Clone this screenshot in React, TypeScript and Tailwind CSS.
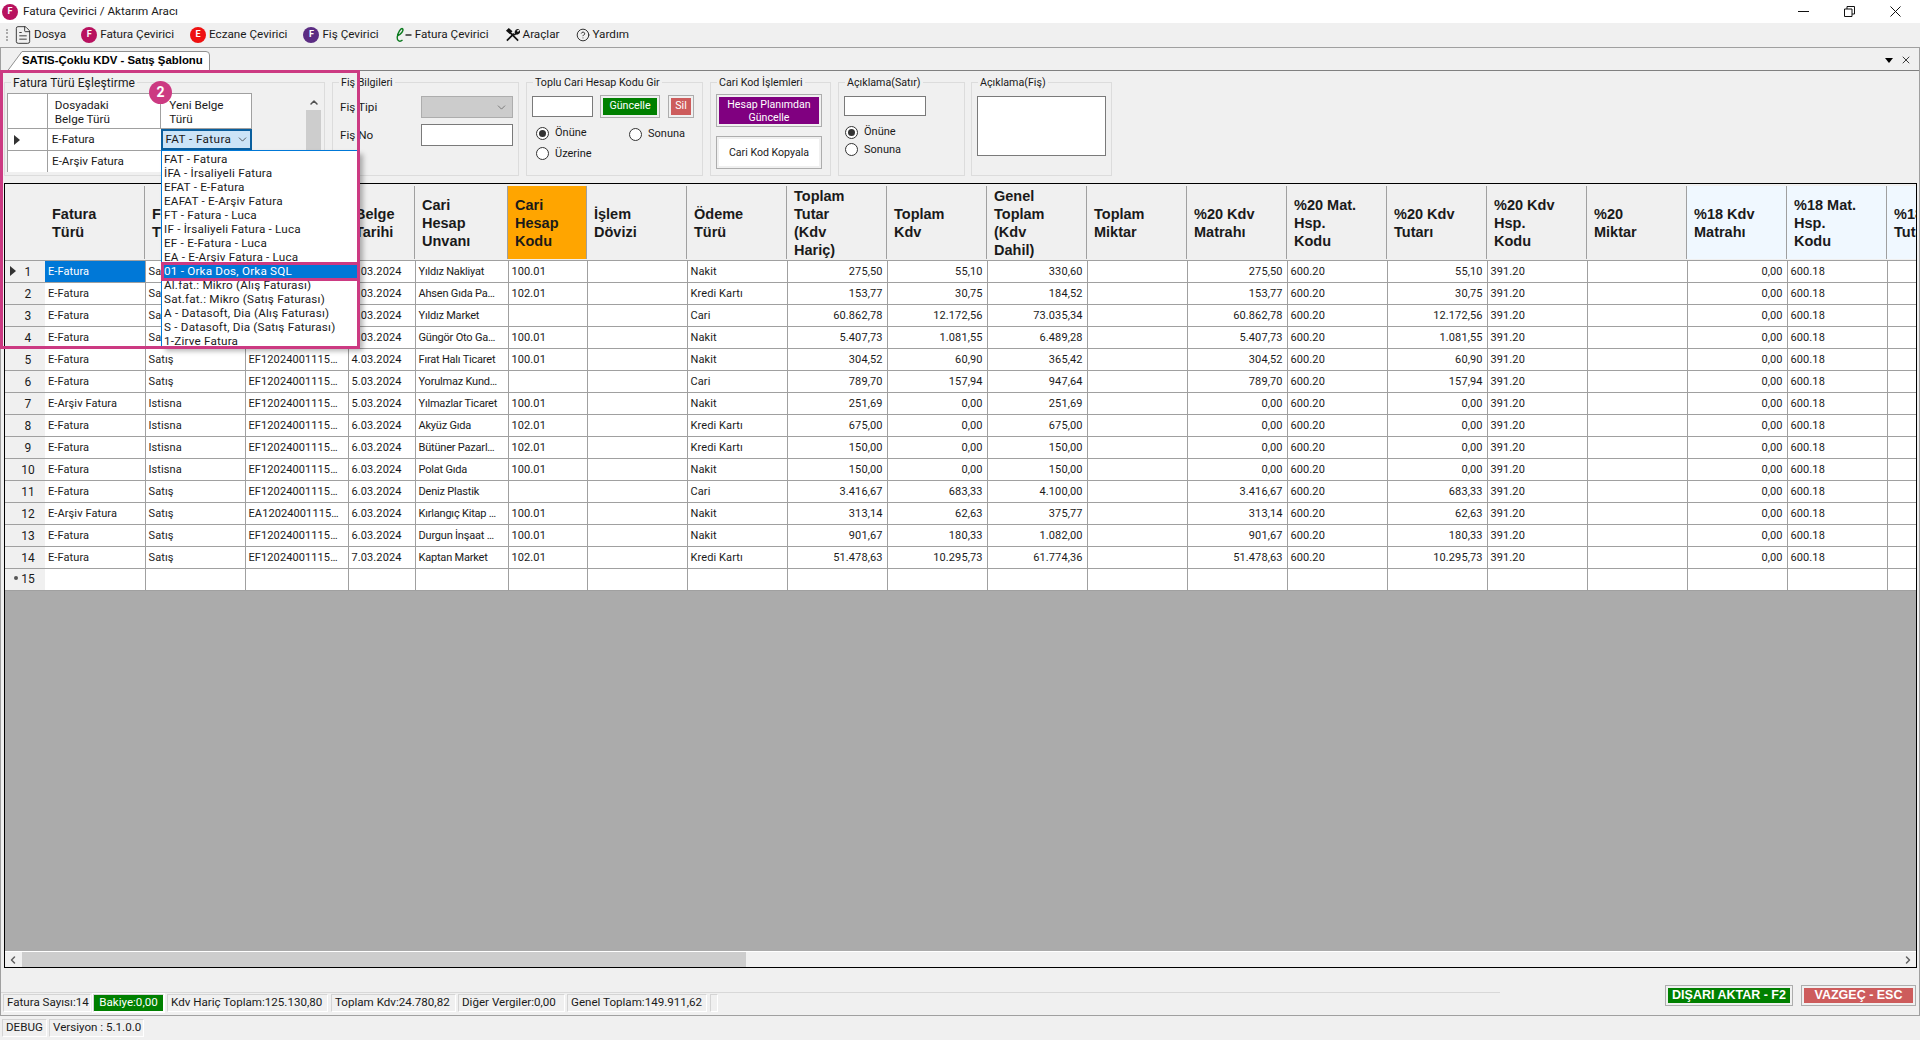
import React from "react";
import { ChevronDown, ChevronLeft, ChevronRight, ChevronUp, CircleHelp, FileText, X } from "lucide-react";

// one tuple per invoice: type, kind, belge no, date, unvan, kod, odeme, tutar, kdv, genel, %20 matrah, %20 tutar
const invoices = [
  ["E-Fatura", "Satış", "EF12024001115…", "1.03.2024", "Yıldız Nakliyat", "100.01", "Nakit", "275,50", "55,10", "330,60", "275,50", "55,10"],
  ["E-Fatura", "Satış", "EF12024001115…", "2.03.2024", "Ahsen Gıda Pa…", "102.01", "Kredi Kartı", "153,77", "30,75", "184,52", "153,77", "30,75"],
  ["E-Fatura", "Satış", "EF12024001115…", "3.03.2024", "Yıldız Market", "", "Cari", "60.862,78", "12.172,56", "73.035,34", "60.862,78", "12.172,56"],
  ["E-Fatura", "Satış", "EF12024001115…", "3.03.2024", "Güngör Oto Ga…", "100.01", "Nakit", "5.407,73", "1.081,55", "6.489,28", "5.407,73", "1.081,55"],
  ["E-Fatura", "Satış", "EF12024001115…", "4.03.2024", "Fırat Halı Ticaret", "100.01", "Nakit", "304,52", "60,90", "365,42", "304,52", "60,90"],
  ["E-Fatura", "Satış", "EF12024001115…", "5.03.2024", "Yorulmaz Kund…", "", "Cari", "789,70", "157,94", "947,64", "789,70", "157,94"],
  ["E-Arşiv Fatura", "Istisna", "EF12024001115…", "5.03.2024", "Yılmazlar Ticaret", "100.01", "Nakit", "251,69", "0,00", "251,69", "0,00", "0,00"],
  ["E-Fatura", "Istisna", "EF12024001115…", "6.03.2024", "Akyüz Gıda", "102.01", "Kredi Kartı", "675,00", "0,00", "675,00", "0,00", "0,00"],
  ["E-Fatura", "Istisna", "EF12024001115…", "6.03.2024", "Bütüner Pazarl…", "102.01", "Kredi Kartı", "150,00", "0,00", "150,00", "0,00", "0,00"],
  ["E-Fatura", "Istisna", "EF12024001115…", "6.03.2024", "Polat Gıda", "100.01", "Nakit", "150,00", "0,00", "150,00", "0,00", "0,00"],
  ["E-Fatura", "Satış", "EF12024001115…", "6.03.2024", "Deniz Plastik", "", "Cari", "3.416,67", "683,33", "4.100,00", "3.416,67", "683,33"],
  ["E-Arşiv Fatura", "Satış", "EA12024001115…", "6.03.2024", "Kırlangıç Kitap …", "100.01", "Nakit", "313,14", "62,63", "375,77", "313,14", "62,63"],
  ["E-Fatura", "Satış", "EF12024001115…", "6.03.2024", "Durgun İnşaat …", "100.01", "Nakit", "901,67", "180,33", "1.082,00", "901,67", "180,33"],
  ["E-Fatura", "Satış", "EF12024001115…", "7.03.2024", "Kaptan Market", "102.01", "Kredi Kartı", "51.478,63", "10.295,73", "61.774,36", "51.478,63", "10.295,73"],
];

const columns = [
  { title: ["Fatura", "Türü"], width: "w-[100px]" },
  { title: ["Fatura", "Tipi"], width: "w-[100px]" },
  { title: ["Belge", "No"], width: "w-[103px]" },
  { title: ["Belge", "Tarihi"], width: "w-[67px]" },
  { title: ["Cari", "Hesap", "Unvanı"], width: "w-[93px]" },
  { title: ["Cari", "Hesap", "Kodu"], width: "w-[79px]", bg: "bg-[#ffa500]" },
  { title: ["İşlem", "Dövizi"], width: "w-[100px]" },
  { title: ["Ödeme", "Türü"], width: "w-[100px]" },
  { title: ["Toplam", "Tutar", "(Kdv", "Hariç)"], width: "w-[100px]", right: true },
  { title: ["Toplam", "Kdv"], width: "w-[100px]", right: true },
  { title: ["Genel", "Toplam", "(Kdv", "Dahil)"], width: "w-[100px]", right: true },
  { title: ["Toplam", "Miktar"], width: "w-[100px]" },
  { title: ["%20 Kdv", "Matrahı"], width: "w-[100px]", right: true },
  { title: ["%20 Mat.", "Hsp.", "Kodu"], width: "w-[100px]" },
  { title: ["%20 Kdv", "Tutarı"], width: "w-[100px]", right: true },
  { title: ["%20 Kdv", "Hsp.", "Kodu"], width: "w-[100px]" },
  { title: ["%20", "Miktar"], width: "w-[100px]" },
  { title: ["%18 Kdv", "Matrahı"], width: "w-[100px]", right: true, bg: "bg-[#f0f8ff]" },
  { title: ["%18 Mat.", "Hsp.", "Kodu"], width: "w-[100px]", bg: "bg-[#f0f8ff]" },
  { title: ["%18 Kdv", "Tutarı"], width: "w-[100px]", right: true, bg: "bg-[#f0f8ff]" },
];

const belgeTurleri = [
  "FAT - Fatura",
  "İFA - İrsaliyeli Fatura",
  "EFAT - E-Fatura",
  "EAFAT - E-Arşiv Fatura",
  "FT - Fatura - Luca",
  "IF - İrsaliyeli Fatura - Luca",
  "EF - E-Fatura - Luca",
  "EA - E-Arşiv Fatura - Luca",
  "01 - Orka Dos, Orka SQL",
  "Al.fat.: Mikro (Alış Faturası)",
  "Sat.fat.: Mikro (Satış Faturası)",
  "A - Datasoft, Dia (Alış Faturası)",
  "S - Datasoft, Dia (Satış Faturası)",
  "1-Zirve Fatura",
];

function rowCells(row: string[]) {
  const [type, kind, no, date, name, code, pay, tutar, kdv, genel, m20, t20] = row;
  return [type, kind, no, date, name, code, "", pay, tutar, kdv, genel, "", m20, "600.20", t20, "391.20", "", "0,00", "600.18", ""];
}

function Badge({ letter, color }: { letter: string; color: string }) {
  return (
    <span className={`flex h-4 w-4 shrink-0 items-center justify-center rounded-full text-[9px] font-bold text-white ${color}`}>
      {letter}
    </span>
  );
}

function ToolsIcon() {
  return (
    <svg width="15" height="15" viewBox="0 0 16 16" className="shrink-0">
      <path d="M2 14.5L9.5 7M14 14.5L5 5.5" stroke="#111" strokeWidth="1.8" fill="none" />
      <path d="M1 4l3-3 4 3.5-3 3zM15.5 2.5a3.6 3.6 0 0 0-5 4.3l-1.3 1.3 1.2 1.2 1.3-1.3a3.6 3.6 0 0 0 4.3-4.7l-2.2 2-1.4-1.2z" fill="#111" />
    </svg>
  );
}

function EInvoiceIcon() {
  return (
    <svg width="17" height="16" viewBox="0 0 17 16" className="shrink-0" fill="none">
      <path d="M2 9C6 7.5 9 3.5 7.6 1.8 6 .4 2.6 6 2.2 10.2c-.3 4 2.8 5 5.3 2.8" stroke="#0b7a1e" strokeWidth="1.4" />
      <path d="M10.5 8h6" stroke="#222" strokeWidth="1.4" />
    </svg>
  );
}

function ToolbarItem({ icon, label }: { icon: React.ReactNode; label: string }) {
  return (
    <div className="flex items-center gap-[3px]">
      {icon}
      <span>{label}</span>
    </div>
  );
}

function Radio({ label, checked, className }: { label: string; checked?: boolean; className?: string }) {
  return (
    <div className={`flex items-center gap-[6px] text-[11px] ${className ?? ""}`}>
      <span className="flex h-[13px] w-[13px] items-center justify-center rounded-full border border-[#333] bg-white">
        {checked && <span className="h-[7px] w-[7px] rounded-full bg-[#333]" />}
      </span>
      {label}
    </div>
  );
}

function FrameButton({ fill, className, children }: { fill: string; className: string; children: React.ReactNode }) {
  return (
    <div className={`border border-[#adadad] p-[2px] ${className}`}>
      <div className={`flex h-full w-full items-center justify-center text-center ${fill}`}>{children}</div>
    </div>
  );
}

function Group({ title, className, legend, children }: { title: string; className: string; legend?: string; children: React.ReactNode }) {
  return (
    <fieldset className={`h-[101px] shrink-0 border border-[#dcdcdc] ${className}`}>
      <legend className={`relative top-[1px] ml-[6px] px-[2px] leading-[14px] whitespace-nowrap ${legend ?? "text-[10.7px]"}`}>{title}</legend>
      {children}
    </fieldset>
  );
}

function StatusCell({ className, children }: { className: string; children?: React.ReactNode }) {
  return (
    <div className={`flex h-[18px] items-center border border-[#d4d4d4] border-r-white border-b-white px-[3px] text-[11.6px] whitespace-nowrap ${className}`}>
      {children}
    </div>
  );
}

function BelgeTuruGroup() {
  return (
    <Group title="Fatura Türü Eşleştirme" legend="text-[12px] tracking-[0.1px]" className="w-[321px]">
      <div className="flex pt-[4px] pl-[2px]">
        <div className="w-[245px] border-t border-l border-[#a0a0a0] bg-white">
          <div className="flex h-[35px] border-b border-[#a0a0a0]">
            <div className="w-[40px] border-r border-[#a0a0a0]" />
            <div className="w-[114px] border-r border-[#a0a0a0] pt-[4px] pl-[7px] leading-[14px]">Dosyadaki<br />Belge Türü</div>
            <div className="w-[91px] border-r border-[#a0a0a0] pt-[4px] pl-[8px] leading-[14px]">Yeni Belge<br />Türü</div>
          </div>
          <div className="flex h-[22px] border-b border-[#a0a0a0]">
            <div className="flex w-[40px] items-center border-r border-[#a0a0a0] pl-[6px]">
              <span className="border-y-[5px] border-l-[6px] border-y-transparent border-l-[#333]" />
            </div>
            <div className="flex w-[114px] items-center pl-[4px]">E-Fatura</div>
            <div className="flex w-[91px] items-center overflow-hidden border-2 border-[#0a5f9e] bg-[#cce4f7] pl-[2px]">
              <span className="w-[68px] overflow-hidden tracking-[0.4px] whitespace-nowrap">FAT - Fatura</span>
              <ChevronDown size={13} strokeWidth={1.25} className="ml-[3px]" />
            </div>
          </div>
          <div className="flex h-[21px]">
            <div className="w-[40px] border-r border-[#a0a0a0]" />
            <div className="flex w-[114px] items-center pl-[4px]">E-Arşiv Fatura</div>
          </div>
        </div>
        <div className="ml-[54px] flex h-[79px] w-[15px] flex-col items-center bg-[#f0f0f0]">
          <ChevronUp size={12} strokeWidth={3} className="mt-[2px] h-[15px] text-[#505050]" />
          <div className="w-full flex-1 bg-[#cdcdcd]" />
        </div>
      </div>
    </Group>
  );
}

function OptionsPanel() {
  return (
    <div className="flex h-[112px] shrink-0 gap-[7px] pt-[4px] pl-[3px]">
      <BelgeTuruGroup />
      <Group title="Fiş Bilgileri" className="w-[187px]">
        <div className="flex items-center pt-[7px] pl-[7px]">
          <span className="w-[81px] pt-[2px]">Fiş Tipi</span>
          <div className="flex h-[22px] w-[92px] items-center justify-end border border-[#adadad] bg-[#cccccc] pr-[4px]">
            <ChevronDown size={13} strokeWidth={1.25} className="text-[#555]" />
          </div>
        </div>
        <div className="flex items-center pt-[6px] pl-[7px]">
          <span className="w-[81px] pt-[1px]">Fiş No</span>
          <div className="h-[22px] w-[92px] border border-[#7a7a7a] bg-white" />
        </div>
      </Group>
      <Group title="Toplu Cari Hesap Kodu Gir" className="w-[177px]">
        <div className="flex items-center pt-[6px] pl-[5px] text-[10.7px]">
          <div className="h-[21px] w-[61px] border border-[#7a7a7a] bg-white" />
          <FrameButton fill="bg-[#008000] text-white" className="ml-[7px] h-[23px] w-[60px]">Güncelle</FrameButton>
          <FrameButton fill="bg-[#cd5c5c] text-white" className="ml-[8px] h-[23px] w-[26px]">Sil</FrameButton>
        </div>
        <div className="grid grid-cols-[93px_1fr] pt-[6px] pl-[9px]">
          <Radio label="Önüne" checked />
          <Radio label="Sonuna" className="mt-[2px]" />
          <Radio label="Üzerine" className="mt-[3px]" />
        </div>
      </Group>
      <Group title="Cari Kod İşlemleri" className="w-[121px]">
        <div className="flex flex-col gap-[9px] pt-[5px] pl-[5px] text-[10.6px]">
          <FrameButton fill="bg-[#800080] text-white leading-[13px]" className="h-[33px] w-[106px]">
            <span>Hesap Planımdan<br />Güncelle</span>
          </FrameButton>
          <FrameButton fill="bg-white" className="h-[33px] w-[106px]">Cari Kod Kopyala</FrameButton>
        </div>
      </Group>
      <Group title="Açıklama(Satır)" className="w-[127px]">
        <div className="flex flex-col pt-[7px] pl-[5px]">
          <div className="h-[20px] w-[82px] border border-[#7a7a7a] bg-white" />
          <Radio label="Önüne" checked className="mt-[8px] ml-[1px]" />
          <Radio label="Sonuna" className="mt-[1px] ml-[1px]" />
        </div>
      </Group>
      <Group title="Açıklama(Fiş)" className="-ml-px w-[141px]">
        <div className="pt-[7px] pl-[5px]">
          <div className="h-[60px] w-[129px] border border-[#7a7a7a] bg-white" />
        </div>
      </Group>
    </div>
  );
}

function InvoiceGrid() {
  return (
    <div className="mr-[2px] ml-[3px] flex h-[785px] shrink-0 flex-col overflow-hidden border border-black bg-[#ababab]">
      <table className="w-[1881px] shrink-0 table-fixed border-collapse bg-white text-[11px] tracking-[0.1px] text-[#1a1a1a]">
        <colgroup>
          <col className="w-[40px]" />
          {columns.map((c) => (
            <col key={c.title.join(" ")} className={c.width} />
          ))}
        </colgroup>
        <thead>
          <tr>
            <th className="h-[76px] border-b border-[#a0a0a0] bg-[#f0f0f0] p-0" />
            {columns.map((c) => (
              <th key={c.title.join(" ")} className="h-[76px] border-b border-[#a0a0a0] bg-[#f0f0f0] p-0 pt-[2px]">
                <div className={`flex h-[73px] items-center border-r border-[#a0a0a0] pl-[7px] text-left font-['Liberation_Sans',sans-serif] text-[14.5px] leading-[18px] font-bold tracking-normal whitespace-nowrap ${c.bg ?? ""}`}>
                  <div>
                    {c.title.map((line) => (
                      <div key={line}>{line}</div>
                    ))}
                  </div>
                </div>
              </th>
            ))}
          </tr>
        </thead>
        <tbody>
          {invoices.map((row, i) => (
            <tr key={i} className="h-[22px]">
              <td className="border-b border-[#a0a0a0] bg-[#f0f0f0] p-0 pt-[2px] text-[12px]">
                <div className="relative pl-[6px] text-center">
                  {i === 0 && <span className="absolute top-[3px] left-[5px] border-y-[5px] border-l-[6px] border-y-transparent border-l-[#333]" />}
                  {i + 1}
                </div>
              </td>
              {rowCells(row).map((cell, j) => (
                <td
                  key={j}
                  className={`overflow-hidden border-r border-b border-[#a0a0a0] p-0 pt-[3px] whitespace-nowrap ${columns[j].right ? "pr-[4px] text-right" : "pl-[3px]"} ${j === 4 ? "tracking-[-0.2px]" : ""} ${i === 0 && j === 0 ? "bg-[#0078d7] text-white" : ""}`}
                >
                  {cell}
                </td>
              ))}
            </tr>
          ))}
          <tr className="h-[22px]">
            <td className="border-b border-[#a0a0a0] bg-[#f0f0f0] p-0 text-[12px]">
              <div className="relative pl-[6px] text-center">
                <span className="absolute top-[6px] left-[9px] h-[4px] w-[4px] rounded-full bg-[#555]" />
                15
              </div>
            </td>
            {columns.map((c) => (
              <td key={c.title.join(" ")} className="border-r border-b border-[#a0a0a0] p-0" />
            ))}
          </tr>
        </tbody>
      </table>
      <div className="flex-1" />
      <div className="flex h-[16px] shrink-0 items-center border-t border-white bg-[#f0f0f0]">
        <ChevronLeft size={12} strokeWidth={3} className="ml-[2px] text-[#606060]" />
        <div className="ml-[3px] h-full w-[724px] bg-[#cdcdcd]" />
        <div className="flex-1" />
        <ChevronRight size={12} strokeWidth={3} className="mr-[2px] text-[#606060]" />
      </div>
    </div>
  );
}

function BottomBar() {
  return (
    <div className="flex h-[47px] shrink-0 justify-between">
      <div className="pt-[24px]">
        <div className="flex h-[23px] w-[1499px] gap-[2px] border-t border-[#d8d8d8] pt-[1px] pl-[2px]">
          <StatusCell className="w-[88px]">Fatura Sayısı:14</StatusCell>
          <StatusCell className="w-[71px] justify-center border-[#008000] bg-[#008000] text-white outline outline-white">Bakiye:0,00</StatusCell>
          <StatusCell className="ml-[1px] w-[161px]">Kdv Hariç Toplam:125.130,80</StatusCell>
          <StatusCell className="ml-[1px] w-[125px]">Toplam Kdv:24.780,82</StatusCell>
          <StatusCell className="w-[107px]">Diğer Vergiler:0,00</StatusCell>
          <StatusCell className="w-[140px]">Genel Toplam:149.911,62</StatusCell>
          <StatusCell className="ml-px w-[4px]" />
        </div>
      </div>
      <div className="flex gap-[8px] pt-[17px] pr-[3px] font-['Liberation_Sans',sans-serif] text-[12.5px] font-bold text-white">
        <FrameButton fill="bg-[#008000]" className="h-[21px] w-[128px]">DIŞARI AKTAR - F2</FrameButton>
        <FrameButton fill="bg-[#cd5c5c]" className="h-[21px] w-[115px]">VAZGEÇ - ESC</FrameButton>
      </div>
    </div>
  );
}

export default function App() {
  return (
    <div className="relative flex h-[1040px] w-[1920px] flex-col overflow-hidden bg-[#f0f0f0] font-['Roboto',sans-serif] text-[11.7px] text-[#1a1a1a]">
      <div className="flex h-[23px] shrink-0 items-center bg-white pl-[2px]">
        <Badge letter="F" color="bg-[#b8125f]" />
        <span className="ml-[5px]">Fatura Çevirici / Aktarım Aracı</span>
        <div className="ml-auto flex items-center pr-[2px]">
          <div className="flex w-[45px] justify-center"><svg width="11" height="11" viewBox="0 0 11 11"><path d="M0 5.5h11" stroke="#111" /></svg></div>
          <div className="flex w-[46px] justify-center"><svg width="11" height="11" viewBox="0 0 11 11" fill="none" stroke="#111"><path d="M.5 3h7.5v7.5H.5zM3 3V.5h7.5V8H8" /></svg></div>
          <div className="flex w-[46px] justify-center"><svg width="11" height="11" viewBox="0 0 11 11"><path d="M.5.5l10 10M10.5.5l-10 10" stroke="#111" /></svg></div>
        </div>
      </div>

      <div className="flex h-[24px] shrink-0 items-center gap-4 pl-[6px]">
        <div className="mr-[-13px] h-[12px] w-[2px] border-l-2 border-dotted border-[#aaaaaa]" />
        <div className="mr-[-1px] ml-[5px] flex items-center gap-[1px]">
          <FileText size={20} strokeWidth={1} className="-ml-[3px] shrink-0" />
          <span>Dosya</span>
        </div>
        <ToolbarItem icon={<Badge letter="F" color="bg-[#b8125f]" />} label="Fatura Çevirici" />
        <ToolbarItem icon={<Badge letter="E" color="bg-[#ee1111]" />} label="Eczane Çevirici" />
        <ToolbarItem icon={<Badge letter="F" color="bg-[#5b2c83]" />} label="Fiş Çevirici" />
        <ToolbarItem icon={<EInvoiceIcon />} label="Fatura Çevirici" />
        <ToolbarItem icon={<ToolsIcon />} label="Araçlar" />
        <ToolbarItem icon={<CircleHelp size={14} strokeWidth={1.5} className="shrink-0" />} label="Yardım" />
      </div>

      <div className="flex h-[969px] shrink-0 flex-col border-x border-y border-x-[#a0a0a0] border-y-[#a0a0a0]">
        <div className="flex h-[23px] shrink-0 items-end border-b border-[#808080]">
          <div className="relative mb-[-1px] ml-[6px] flex h-[20px] w-[203px] items-center">
            <svg width="203" height="20" viewBox="0 0 203 20" className="absolute inset-0">
              <path d="M.5 20L15 .5h184a3.5 3.5 0 0 1 3.5 3.5v16" fill="#fff" stroke="#909090" />
            </svg>
            <span className="relative ml-[15px] font-['Liberation_Sans',sans-serif] text-[11.4px] font-bold whitespace-nowrap text-black">
              SATIS-Çoklu KDV - Satış Şablonu
            </span>
          </div>
          <div className="mb-[4px] ml-auto flex items-center gap-[7px] pr-[7px]">
            <span className="border-x-[4px] border-t-[5px] border-x-transparent border-t-black" />
            <X size={12} strokeWidth={1.5} className="text-black" />
          </div>
        </div>
        <OptionsPanel />
        <InvoiceGrid />
        <BottomBar />
      </div>

      <div className="flex gap-[2px] pt-[3px] pl-[2px]">
        <StatusCell className="w-[45px]">DEBUG</StatusCell>
        <StatusCell className="w-[95px]">Versiyon : 5.1.0.0</StatusCell>
      </div>

      {/* Belge turu dropdown, opened over the grid */}
      <div className="absolute top-[150px] left-[161px] h-[197px] w-[198px] border border-[#0078d7] bg-white pt-[1px] tracking-[0.2px] shadow-[4px_4px_5px_rgba(0,0,0,0.3)]">
        {belgeTurleri.map((item) => (
          <div
            key={item}
            className={`h-[14px] pl-[2px] leading-[14px] whitespace-nowrap ${item.startsWith("01") ? "bg-[#0078d7] text-white" : ""}`}
          >
            {item}
          </div>
        ))}
      </div>

      {/* annotation marks */}
      <div className="pointer-events-none absolute top-[70px] left-0 h-[279px] w-[360px] border-[3px] border-[#cc3a82]" />
      <div className="pointer-events-none absolute top-[262px] left-[161px] h-[19px] w-[199px] border-[3px] border-[#cc3a82]" />
      <div className="absolute top-[81px] left-[149px] flex h-[23px] w-[23px] items-center justify-center rounded-full bg-[#cc3a82] text-[14px] font-bold text-white">
        2
      </div>
    </div>
  );
}
